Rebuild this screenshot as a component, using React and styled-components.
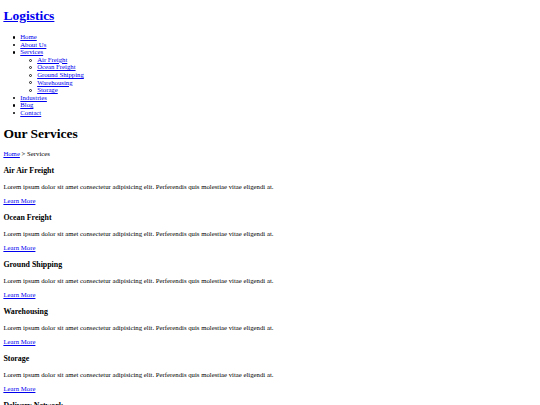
import React from "react";
import styled, { createGlobalStyle } from "styled-components";

const S = 0.421875;
const px = (n) => `${(n * S).toFixed(3)}px`;

const Global = createGlobalStyle`
  html, body {
    background: #ffffff;
  }
  body {
    margin: ${px(8)};
    font-family: "Liberation Serif", "Times New Roman", serif;
    font-size: ${px(16)};
    line-height: ${px(18)};
    color: #000000;
  }
`;

const Link = styled.a`
  color: #0000ee;
  text-decoration: underline;
  cursor: pointer;
`;

const SiteHeader = styled.header`
  display: block;
`;

const Logo = styled.h1`
  font-size: ${px(32)};
  line-height: ${px(37)};
  font-weight: bold;
  margin: ${px(12)} 0 ${px(21.44)};
`;

const NavList = styled.ul`
  list-style: none;
  margin: ${(p) => (p.$nested ? "0" : `${px(16)} 0`)};
  padding-left: ${px(40)};
`;

const NavItem = styled.li`
  position: relative;

  &::before {
    content: "";
    position: absolute;
    box-sizing: border-box;
    left: ${(p) => (p.$nested ? px(-18.5) : px(-18))};
    top: ${(p) => (p.$nested ? px(6.5) : px(7))};
    width: ${(p) => (p.$nested ? "3px" : px(6))};
    height: ${(p) => (p.$nested ? "3px" : px(6))};
    border-radius: 50%;
    background: ${(p) => (p.$nested ? "transparent" : "#000")};
    border: ${(p) => (p.$nested ? "0.7px solid #222" : "none")};
  }
`;

const Main = styled.main`
  display: block;
`;

const PageTitle = styled.h1`
  font-size: ${px(32)};
  line-height: ${px(37)};
  font-weight: bold;
  margin: ${px(21.44)} 0;
`;

const Breadcrumb = styled.p`
  margin: ${px(16)} 0;
`;

const ServiceCard = styled.section`
  display: block;
`;

const ServiceTitle = styled.h3`
  font-size: ${px(18.72)};
  line-height: ${px(22)};
  font-weight: bold;
  margin: ${px(18.72)} 0;
`;

const ServiceText = styled.p`
  margin: ${px(16)} 0;
`;

const services = [
  "Air Air Freight",
  "Ocean Freight",
  "Ground Shipping",
  "Warehousing",
  "Storage",
  "Delivery Network",
];

const lorem =
  "Lorem ipsum dolor sit amet consectetur adipisicing elit. Perferendis quis molestiae vitae eligendi at.";

export default function App() {
  return (
    <>
      <Global />
      <SiteHeader>
        <Logo>
          <Link href="#">Logistics</Link>
        </Logo>
        <nav>
          <NavList>
            <NavItem><Link href="#">Home</Link></NavItem>
            <NavItem><Link href="#">About Us</Link></NavItem>
            <NavItem>
              <Link href="#">Services</Link>
              <NavList $nested>
                <NavItem $nested><Link href="#">Air Freight</Link></NavItem>
                <NavItem $nested><Link href="#">Ocean Freight</Link></NavItem>
                <NavItem $nested><Link href="#">Ground Shipping</Link></NavItem>
                <NavItem $nested><Link href="#">Warehousing</Link></NavItem>
                <NavItem $nested><Link href="#">Storage</Link></NavItem>
              </NavList>
            </NavItem>
            <NavItem><Link href="#">Industries</Link></NavItem>
            <NavItem><Link href="#">Blog</Link></NavItem>
            <NavItem><Link href="#">Contact</Link></NavItem>
          </NavList>
        </nav>
      </SiteHeader>
      <Main>
        <PageTitle>Our Services</PageTitle>
        <Breadcrumb>
          <Link href="#">Home</Link> &gt; Services
        </Breadcrumb>
        {services.map((s) => (
          <ServiceCard key={s}>
            <ServiceTitle>{s}</ServiceTitle>
            <ServiceText>{lorem}</ServiceText>
            <ServiceText>
              <Link href="#">Learn More</Link>
            </ServiceText>
          </ServiceCard>
        ))}
      </Main>
    </>
  );
}
